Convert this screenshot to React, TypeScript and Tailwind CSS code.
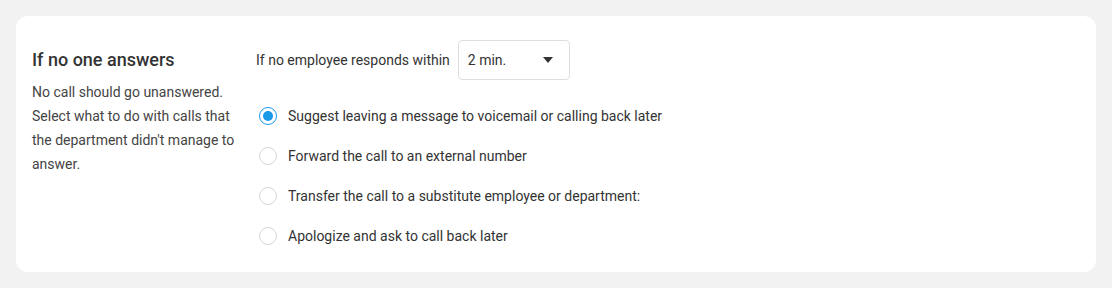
import React from "react";

const options = [
  "Suggest leaving a message to voicemail or calling back later",
  "Forward the call to an external number",
  "Transfer the call to a substitute employee or department:",
  "Apologize and ask to call back later",
];

function Radio({ checked }: { checked: boolean }) {
  return checked ? (
    <span className="flex h-[18px] w-[18px] shrink-0 items-center justify-center rounded-full border-[1.5px] border-[#1a9ae6]">
      <span className="h-[10px] w-[10px] rounded-full bg-[#1a9ae6]" />
    </span>
  ) : (
    <span className="h-[18px] w-[18px] shrink-0 rounded-full border border-[#d6d6d6] bg-white" />
  );
}

export default function App() {
  return (
    <div className="min-h-[288px] bg-[#f1f2f1] p-4 font-['Roboto',sans-serif] text-[#333]">
      <div className="flex rounded-xl bg-white px-4 pt-6 pb-4">
        <div className="w-[224px] shrink-0">
          <h2 className="mt-[8px] text-[18px] leading-6 font-medium text-[#333]">If no one answers</h2>
          <p className="mt-[8px] w-[206px] text-[14px] leading-6 text-[#444]">
            No call should go unanswered. Select what to do with calls that the department didn't manage to answer.
          </p>
        </div>
        <div className="flex flex-col">
          <div className="flex items-center gap-2">
            <span className="text-[14px] text-[#333]">If no employee responds within</span>
            <div className="flex h-10 w-28 items-center justify-between rounded border border-[#dedede] pr-4 pl-[9px] text-[14px]">
              <span>2 min.</span>
              <svg width="10" height="6" viewBox="0 0 10 6">
                <path d="M0 0h10L5 6z" fill="#333" />
              </svg>
            </div>
          </div>
          <div className="mt-[16px] flex flex-col">
            {options.map((o, i) => (
              <label key={i} className="flex h-10 items-center gap-[11px] pl-[3px] text-[14px] text-[#333]">
                <Radio checked={i === 0} />
                <span>{o}</span>
              </label>
            ))}
          </div>
        </div>
      </div>
    </div>
  );
}
